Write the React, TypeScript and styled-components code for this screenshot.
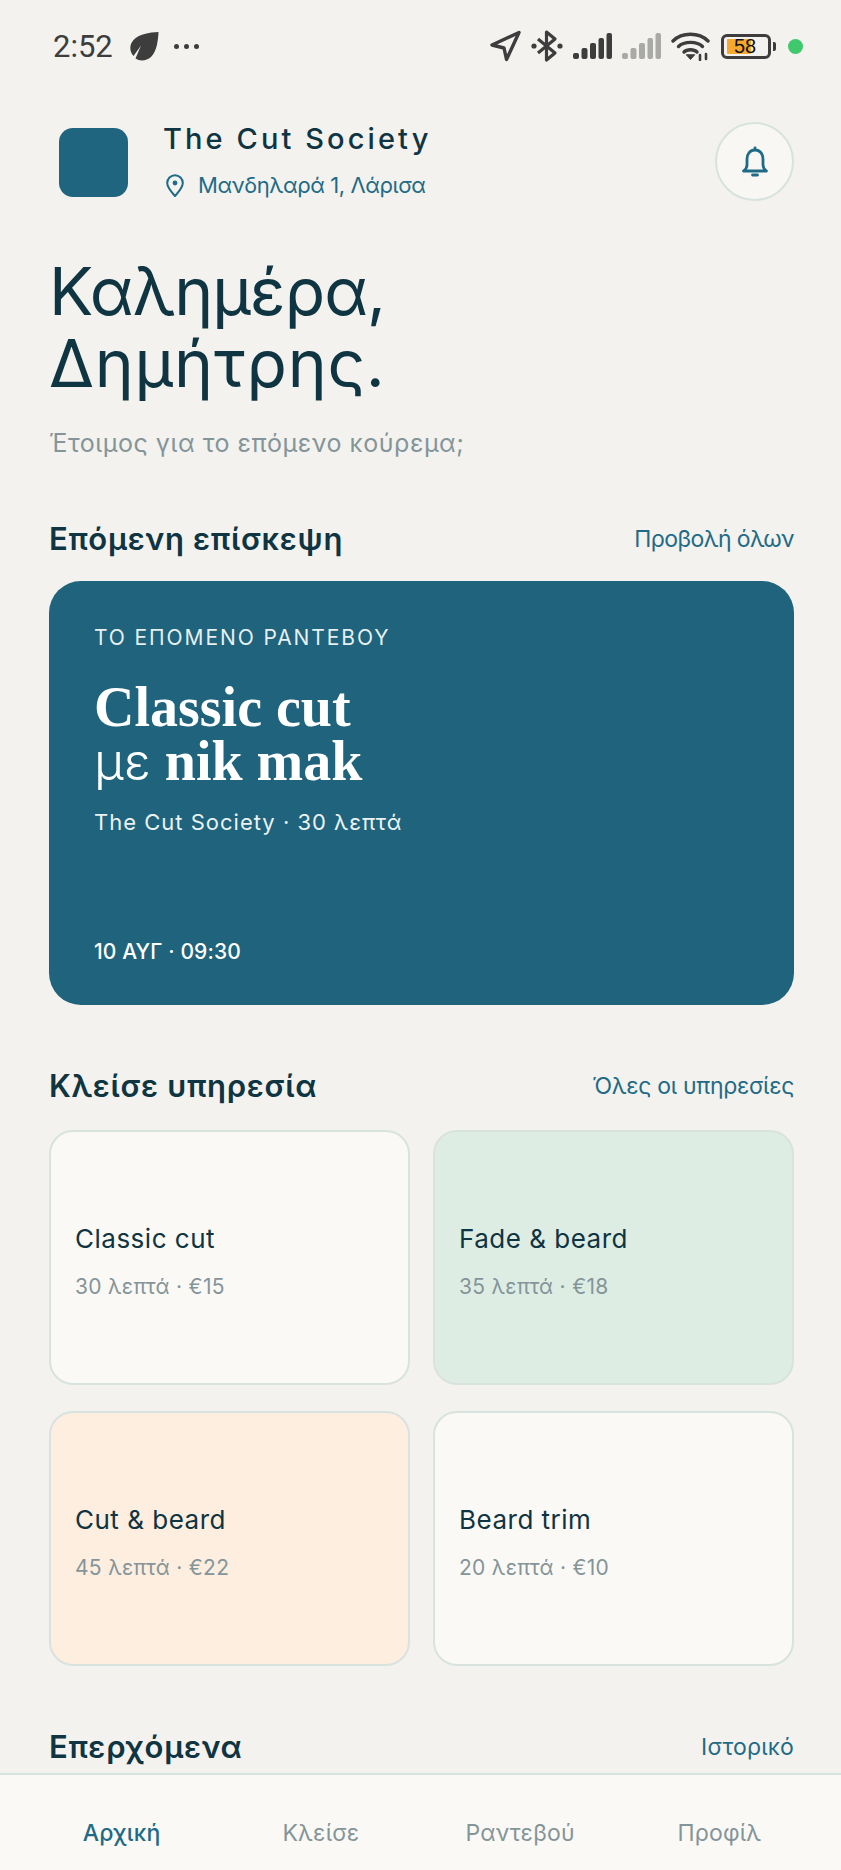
import React from 'react';
import styled, { createGlobalStyle } from 'styled-components';

const ink = '#0f3442';
const teal = '#1f6b87';
const muted = '#84959a';
const line = '#d8e2df';

const GlobalStyle = createGlobalStyle`
  html, body {
    margin: 0;
    padding: 0;
    background: #f3f2ee;
  }
  * {
    box-sizing: border-box;
  }
`;

const Screen = styled.div`
  width: 841px;
  height: 1870px;
  display: flex;
  flex-direction: column;
  overflow: hidden;
  background: #f3f2ee;
  color: ${ink};
  font-family: Inter, 'Noto Sans', sans-serif;
`;

const StatusBar = styled.div`
  height: 92px;
  flex: none;
  display: flex;
  align-items: center;
  justify-content: space-between;
  padding: 0 38px 0 53px;
  color: #3d3d3d;
`;

const StatusGroup = styled.div`
  display: flex;
  align-items: center;
  gap: ${(p: { $gap: number }) => p.$gap}px;
`;

const Clock = styled.span`
  font-family: Roboto, sans-serif;
  font-size: 31px;
  margin-right: 1px;
`;

const Dots = styled.span`
  display: flex;
  gap: 5px;

  i {
    width: 5px;
    height: 5px;
    border-radius: 50%;
    background: #3d3d3d;
  }
`;

const Battery = styled.div`
  width: 55px;
  height: 25px;
  position: relative;
  margin-left: 1px;
  padding-right: 5px;
`;

const BatteryShell = styled.div`
  height: 100%;
  border: 3px solid #3d3d3d;
  border-radius: 6px;
  padding: 2px 3px;
  position: relative;
  display: flex;
`;

const BatteryFill = styled.div`
  width: 24px;
  background: #f7a92f;
  border-radius: 1px;
`;

const BatteryText = styled.span`
  position: absolute;
  left: 10px;
  top: -3px;
  font-family: 'Liberation Sans', sans-serif;
  font-size: 20px;
  line-height: 25px;
  color: #111;
`;

const BatteryCap = styled.div`
  position: absolute;
  right: 0;
  top: 8px;
  width: 3px;
  height: 9px;
  border-radius: 0 2px 2px 0;
  background: #3d3d3d;
`;

const GreenDot = styled.div`
  width: 15px;
  height: 15px;
  border-radius: 50%;
  background: #3fc86c;
  margin-left: 2px;
`;

const Main = styled.main`
  flex: 1;
  min-height: 0;
  overflow: hidden;
  padding: 0 47px 0 49px;
`;

const Header = styled.header`
  display: flex;
  align-items: center;
  padding: 30px 0 0 10px;
`;

const Logo = styled.div`
  width: 69px;
  height: 69px;
  border-radius: 14px;
  background: #206580;
  flex: none;
  margin-top: 2px;
`;

const Brand = styled.div`
  flex: 1;
  margin-left: 35px;
  margin-top: -3px;
`;

const BrandName = styled.div`
  font-size: 29px;
  line-height: 36px;
  font-weight: 500;
  letter-spacing: 3.1px;
`;

const Address = styled.div`
  display: flex;
  align-items: center;
  gap: 14px;
  margin-top: 14px;
  padding-left: 3px;
  color: ${teal};
  font-size: 22px;
  line-height: 28px;
  letter-spacing: -0.4px;
`;

const BellButton = styled.button`
  width: 79px;
  height: 79px;
  border-radius: 50%;
  border: 2px solid ${line};
  background: #f8f7f3;
  display: flex;
  align-items: center;
  justify-content: center;
  color: ${teal};
  padding: 0;
`;

const Greeting = styled.h1`
  margin: 54px 0 0;
  font-size: 66px;
  line-height: 72px;
  font-weight: 400;
`;

const GreetingLine = styled.span<{ $track: number }>`
  display: block;
  letter-spacing: ${(p) => p.$track}px;
`;

const Lead = styled.p`
  margin: 27px 0 0;
  font-size: 25px;
  line-height: 34px;
  letter-spacing: 0.55px;
  color: ${muted};
`;

const SectionHead = styled.div<{ $top: number; $bottom: number }>`
  display: flex;
  align-items: center;
  justify-content: space-between;
  margin-top: ${(p) => p.$top}px;
  margin-bottom: ${(p) => p.$bottom}px;
`;

const SectionTitle = styled.h2`
  margin: 0;
  font-size: 31px;
  line-height: 40px;
  font-weight: 600;
  letter-spacing: 0.7px;
`;

const SectionLink = styled.a<{ $track: number }>`
  font-size: 23px;
  line-height: 40px;
  color: ${teal};
  letter-spacing: ${(p) => p.$track}px;
`;

const NextCard = styled.section`
  height: 424px;
  border-radius: 32px;
  background: #1f637c;
  color: #fff;
  padding: 43px 45px 39px;
  display: flex;
  flex-direction: column;
`;

const Eyebrow = styled.div`
  font-size: 21px;
  line-height: 28px;
  letter-spacing: 1.9px;
  color: #e6eff2;
`;

const NextTitle = styled.h3`
  margin: 28px 0 0;
  font-family: 'Liberation Serif', serif;
  font-size: 56px;
  line-height: 54px;
  font-weight: 700;
`;

const ThinGreek = styled.span`
  font-family: Inter, sans-serif;
  font-weight: 300;
  font-size: 51px;
  line-height: 0;
`;

const NextMeta = styled.div`
  margin-top: 19px;
  font-size: 22px;
  line-height: 30px;
  letter-spacing: 1px;
  color: #eaf2f4;
`;

const NextDate = styled.div`
  margin-top: auto;
  font-size: 21px;
  line-height: 28px;
  font-weight: 500;
  letter-spacing: 0.1px;
`;

const ServiceGrid = styled.div`
  display: grid;
  grid-template-columns: 1fr 1fr;
  gap: 26px 23px;
`;

const ServiceCard = styled.div<{ $bg: string }>`
  height: 255px;
  border-radius: 24px;
  border: 2px solid ${line};
  background: ${(p) => p.$bg};
  padding: 8px 24px 0;
  display: flex;
  flex-direction: column;
  justify-content: center;
`;

const ServiceName = styled.div`
  font-size: 26px;
  line-height: 32px;
  letter-spacing: 0.5px;
`;

const ServiceMeta = styled.div`
  margin-top: 18px;
  font-size: 21px;
  line-height: 28px;
  letter-spacing: 0.3px;
  color: ${muted};
`;

const BottomNav = styled.nav`
  height: 97px;
  flex: none;
  border-top: 2px solid ${line};
  background: #fbf9f5;
  padding: 20px 22px 0;
  display: grid;
  grid-template-columns: repeat(4, 1fr);
  align-items: center;
`;

const NavItem = styled.a<{ $active?: boolean }>`
  text-align: center;
  font-size: 23px;
  line-height: 32px;
  letter-spacing: 0.2px;
  font-weight: ${(p) => (p.$active ? 500 : 400)};
  color: ${(p) => (p.$active ? teal : muted)};
`;

const Leaf = () => (
  <svg width="30" height="30" viewBox="0 0 30 30" fill="#3d3d3d">
    <path d="M29.500 1C20 1.500 10 3 4.500 9 0 14 .5 20.500 4.500 25L12 14.500 6.500 27.500C11 30.500 17.500 30 22 26 27.500 20.500 29 11 29.500 1Z" />
  </svg>
);

const LocationArrow = () => (
  <svg width="32" height="32" viewBox="0 0 32 32" fill="none" stroke="#3d3d3d" strokeWidth="3.400" strokeLinejoin="round">
    <path d="M30 2.500 3 15 15 18 17.500 29.500Z" />
  </svg>
);

const Bluetooth = () => (
  <svg width="32" height="34" viewBox="0 0 32 34" fill="none" stroke="#3d3d3d" strokeWidth="3.200" strokeLinejoin="round">
    <path d="M7 10 24 24 15.500 31V3L24 10 7 24" />
    <circle cx="3" cy="17" r="2.600" fill="#3d3d3d" stroke="none" />
    <circle cx="29" cy="17" r="2.600" fill="#3d3d3d" stroke="none" />
  </svg>
);

const Signal = ({ opacity = 1 }: { opacity?: number }) => (
  <svg width="39" height="26" viewBox="0 0 39 26" fill="#3d3d3d" opacity={opacity}>
    <rect x="0" y="20" width="6" height="6" rx="2" />
    <rect x="8.500" y="15" width="6" height="11" rx="2" />
    <rect x="17" y="10" width="6" height="16" rx="2" />
    <rect x="25.500" y="5" width="5.500" height="21" rx="2" />
    <rect x="33.500" y="0" width="5.500" height="26" rx="2" />
  </svg>
);

const Wifi = () => (
  <svg width="39" height="30" viewBox="0 0 39 30" fill="none" stroke="#3d3d3d" strokeWidth="3.400" strokeLinecap="round">
    <path d="M2 10C11 1 28 1 37 10" />
    <path d="M7.500 15.500C13 10 26 10 31.500 15.500" />
    <path d="M13 21C16 18 23 18 26 21" />
    <path d="M15.500 24 19.500 28.500 23.500 24Z" fill="#3d3d3d" strokeWidth="1" strokeLinejoin="round" />
    <path d="M29 29V24M35 28 35 23" strokeWidth="2.600" />
  </svg>
);

const Pin = () => (
  <svg width="18" height="23" viewBox="0 0 18 23" fill="none" stroke={teal} strokeWidth="2">
    <path d="M9 22C5 17.500 1.200 13.500 1.200 9A7.800 7.800 0 0 1 16.800 9C16.800 13.500 13 17.500 9 22Z" strokeLinejoin="round" />
    <circle cx="9" cy="9" r="2.400" fill={teal} stroke="none" />
  </svg>
);

const Bell = () => (
  <svg width="26" height="31" viewBox="0 0 26 31" fill="none" stroke={teal} strokeWidth="2.800" strokeLinecap="round" strokeLinejoin="round">
    <path d="M13 4C8 4 5 8 5 13V19C5 22 3.500 23.500 1.500 25H24.500C22.500 23.500 21 22 21 19V13C21 8 18 4 13 4Z" />
    <path d="M13 1.800V3" />
    <path d="M10.500 29H15.500" />
  </svg>
);

const services = [
  { name: 'Classic cut', meta: '30 λεπτά · €15', bg: '#fbf9f5' },
  { name: 'Fade & beard', meta: '35 λεπτά · €18', bg: '#deede4' },
  { name: 'Cut & beard', meta: '45 λεπτά · €22', bg: '#fdeee0' },
  { name: 'Beard trim', meta: '20 λεπτά · €10', bg: '#fbf9f5' },
];

export default function App() {
  return (
    <Screen>
      <GlobalStyle />

      <StatusBar>
        <StatusGroup $gap={15}>
          <Clock>2:52</Clock>
          <Leaf />
          <Dots>
            <i />
            <i />
            <i />
          </Dots>
        </StatusGroup>
        <StatusGroup $gap={10}>
          <LocationArrow />
          <Bluetooth />
          <Signal />
          <Signal opacity={0.4} />
          <Wifi />
          <Battery>
            <BatteryShell>
              <BatteryFill />
              <BatteryText>58</BatteryText>
            </BatteryShell>
            <BatteryCap />
          </Battery>
          <GreenDot />
        </StatusGroup>
      </StatusBar>

      <Main>
        <Header>
          <Logo />
          <Brand>
            <BrandName>The Cut Society</BrandName>
            <Address>
              <Pin />
              Μανδηλαρά 1, Λάρισα
            </Address>
          </Brand>
          <BellButton>
            <Bell />
          </BellButton>
        </Header>

        <Greeting>
          <GreetingLine $track={-0.9}>Καλημέρα,</GreetingLine>
          <GreetingLine $track={0.8}>Δημήτρης.</GreetingLine>
        </Greeting>
        <Lead>Έτοιμος για το επόμενο κούρεμα;</Lead>

        <SectionHead $top={59} $bottom={22}>
          <SectionTitle>Επόμενη επίσκεψη</SectionTitle>
          <SectionLink $track={-0.6}>Προβολή όλων</SectionLink>
        </SectionHead>
        <NextCard>
          <Eyebrow>ΤΟ ΕΠΟΜΕΝΟ ΡΑΝΤΕΒΟΥ</Eyebrow>
          <NextTitle>
            Classic cut
            <br />
            <ThinGreek>με</ThinGreek> nik mak
          </NextTitle>
          <NextMeta>The Cut Society · 30 λεπτά</NextMeta>
          <NextDate>10 ΑΥΓ · 09:30</NextDate>
        </NextCard>

        <SectionHead $top={61} $bottom={24}>
          <SectionTitle>Κλείσε υπηρεσία</SectionTitle>
          <SectionLink $track={-0.3}>Όλες οι υπηρεσίες</SectionLink>
        </SectionHead>
        <ServiceGrid>
          {services.map((service) => (
            <ServiceCard key={service.name} $bg={service.bg}>
              <ServiceName>{service.name}</ServiceName>
              <ServiceMeta>{service.meta}</ServiceMeta>
            </ServiceCard>
          ))}
        </ServiceGrid>

        <SectionHead $top={61} $bottom={0}>
          <SectionTitle>Επερχόμενα</SectionTitle>
          <SectionLink $track={0.2}>Ιστορικό</SectionLink>
        </SectionHead>
      </Main>

      <BottomNav>
        <NavItem $active>Αρχική</NavItem>
        <NavItem>Κλείσε</NavItem>
        <NavItem>Ραντεβού</NavItem>
        <NavItem>Προφίλ</NavItem>
      </BottomNav>
    </Screen>
  );
}
